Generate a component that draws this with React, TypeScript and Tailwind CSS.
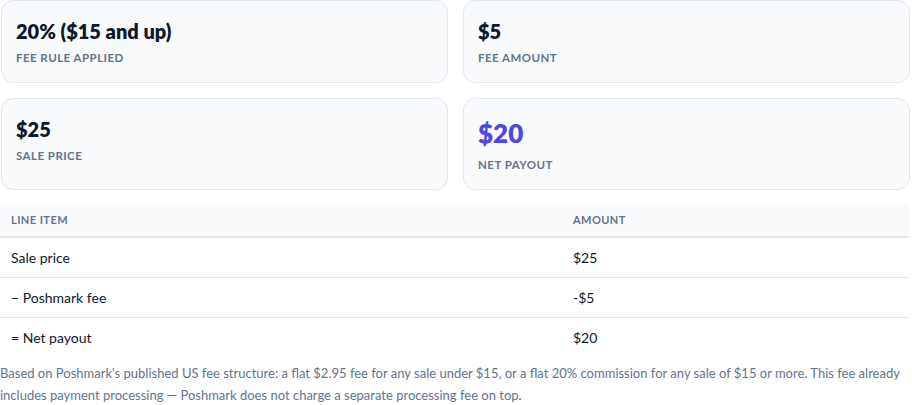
import React from "react";

const font = { fontFamily: "Lato, 'Noto Sans', sans-serif" };

function Card({ value, label, big }: { value: string; label: string; big?: boolean }) {
  return (
    <div className="rounded-xl border border-[#e2e8f0] bg-[#f8fafc] px-[14px] py-4">
      <div
        className={
          big
            ? "text-[26px] leading-[36px] font-extrabold text-[#4f46e5]"
            : "text-[20px] leading-[28px] font-extrabold text-[#0f172a]"
        }
      >
        {value}
      </div>
      <div
        className={
          (big ? "mt-[6px] " : "mt-[5px] ") +
          "text-[11.5px] leading-4 font-bold uppercase tracking-[0.04em] text-[#64748b]"
        }
      >
        {label}
      </div>
    </div>
  );
}

export default function App() {
  const rows = [
    ["Sale price", "$25"],
    ["\u2212 Poshmark fee", "-$5"],
    ["= Net payout", "$20"],
  ];
  return (
    <div className="w-[912px] bg-white pl-[1px] pr-[2px]" style={font}>
      <div className="grid grid-cols-2 gap-x-[15px] gap-y-[15px]">
        <Card value="20% ($15 and up)" label="Fee rule applied" />
        <Card value="$5" label="Fee amount" />
        <Card value="$25" label="Sale price" />
        <Card value="$20" label="Net payout" big />
      </div>
      <table className="mt-[14px] w-full border-collapse -ml-[1px]">
        <thead>
          <tr className="bg-[#f8fafc] border-b-2 border-[#e5e7eb]">
            <th className="h-[33px] pl-[11px] text-left text-[11px] font-bold uppercase tracking-[0.04em] text-[#64748b] w-[562px]">
              Line item
            </th>
            <th className="h-[33px] pl-[11px] text-left text-[11px] font-bold uppercase tracking-[0.04em] text-[#64748b]">
              Amount
            </th>
          </tr>
        </thead>
        <tbody>
          {rows.map(([a, b], i) => (
            <tr key={i} className={i < rows.length - 1 ? "border-b border-[#e5e7eb]" : ""}>
              <td className="h-[40px] pl-[11px] text-[14px] text-[#0f172a]">{a}</td>
              <td className="h-[40px] pl-[11px] text-[14px] text-[#0f172a]">{b}</td>
            </tr>
          ))}
        </tbody>
      </table>
      <p className="mt-[5px] text-[13px] leading-[22px] text-[#64748b] -ml-[1px]">
        Based on Poshmark's published US fee structure: a flat $2.95 fee for any sale under $15, or a flat 20% commission for any sale of $15 or more. This fee already includes payment processing — Poshmark does not charge a separate processing fee on top.
      </p>
    </div>
  );
}
